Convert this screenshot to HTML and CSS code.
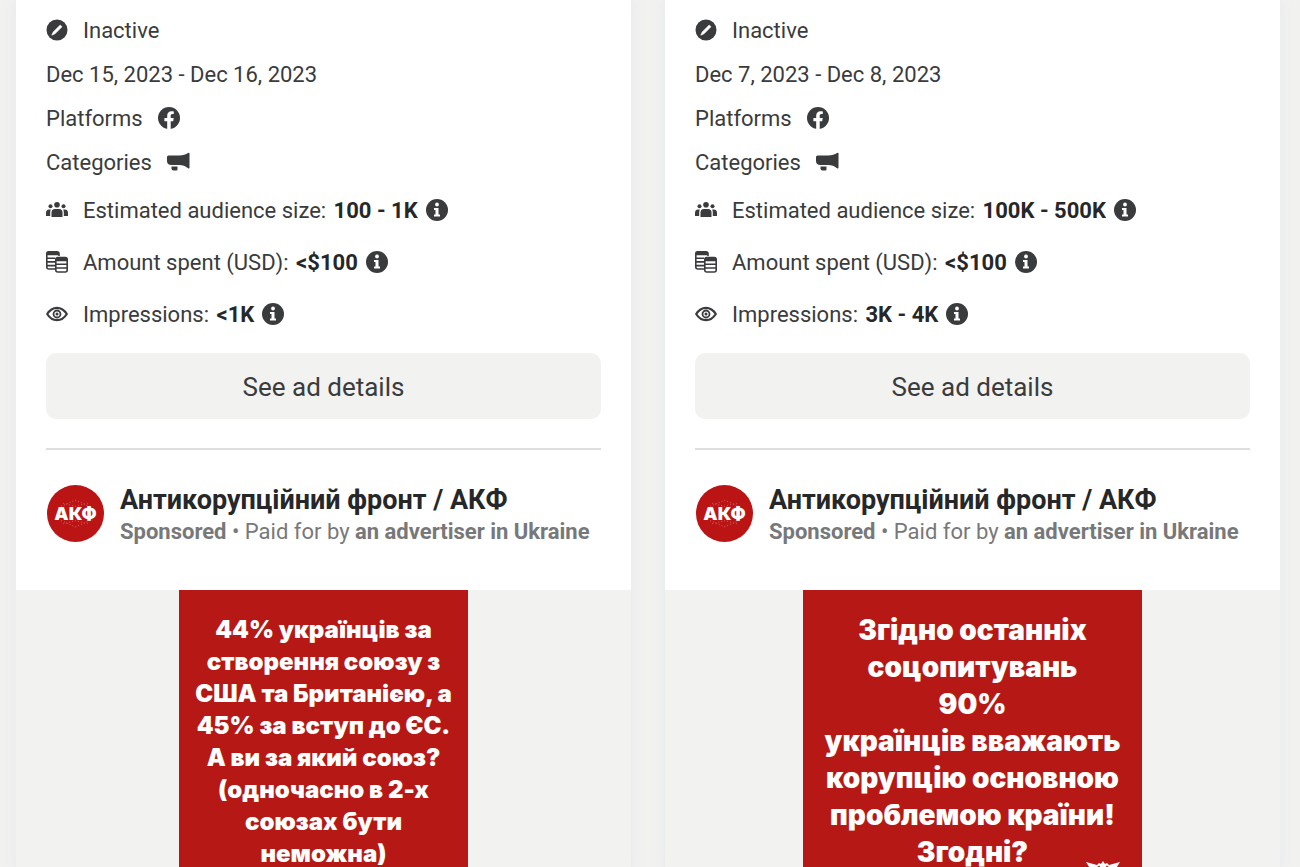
FILE: index.html
```html
<!DOCTYPE html>
<html lang="en">
<head>
    <meta charset="UTF-8">
    <meta name="viewport" content="width=device-width, initial-scale=1.0">
    <title>Ad Library</title>
    <link rel="stylesheet" href="styles.css">
</head>
<body>
    <!-- Shared icons -->
    <svg class="sprite" aria-hidden="true">
        <symbol id="icon-inactive" viewBox="0 0 22 22">
            <circle cx="11" cy="11" r="10.5" fill="#3a3b3c"/>
            <path d="M5.8 16.2L7.2 13L14.2 6L16 7.800L9 14.800Z" fill="#fff" stroke="#fff" stroke-width="0.6" stroke-linejoin="round"/>
        </symbol>
        <symbol id="icon-facebook" viewBox="0 0 22 22">
            <circle cx="11" cy="11" r="11" fill="#3a3b3c"/>
            <path d="M9.2 22V14.2H6.4V11H9.2V8.7C9.2 5.8 10.9 4.2 13.4 4.2C14.6 4.2 15.8 4.4 15.8 4.4V7.1H14.4C13.1 7.1 12.7 7.9 12.7 8.8V11H15.7L15.2 14.2H12.7V22Z" fill="#fff"/>
        </symbol>
        <symbol id="icon-megaphone" viewBox="0 0 24 20">
            <path d="M0 5Q0 3.5 1.500 3.5H12C16 3.5 19 2.5 21 1Q22.500 0.3 22.500 1.5V15.5Q22.500 17.200 21 16.300C18 14 16 13 12 13H4.5Q0 13 0 9Z" fill="#3a3b3c"/>
            <path d="M4.500 14.500H10.500V17Q10.500 18.500 9.500 18.500H6.5Q4.500 18.500 4.500 16.5Z" fill="#3a3b3c"/>
        </symbol>
        <symbol id="icon-people" viewBox="0 0 22 22">
            <g fill="#3a3b3c">
                <circle cx="11" cy="5.7" r="2.8"/>
                <path d="M5.5 18V13.5Q5.5 10 9 10H13Q16.500 10 16.500 13.500V18Z"/>
                <circle cx="4.500" cy="7.200" r="2"/>
                <circle cx="17.500" cy="7.200" r="2"/>
                <path d="M0 17V14Q0 10.500 3 10.500H4.800Q4.200 12 4.200 13.500V17Z"/>
                <path d="M22 17V14Q22 10.500 19 10.500H17.200Q17.800 12 17.800 13.500V17Z"/>
            </g>
        </symbol>
        <symbol id="icon-coins" viewBox="0 0 22 22">
            <g fill="none" stroke="#3a3b3c" stroke-width="1.6">
                <path d="M9 18H3Q0.800 18 0.800 16V2.500Q0.800 0.800 2.500 0.800H11Q13 0.800 13 2.500V5"/>
                <path d="M1 3.500H13M1 7.200H9M1 10.900H9M1 14.600H9"/>
                <rect x="9.800" y="6.500" width="11.400" height="14.500" rx="2"/>
                <path d="M10 9.500H21M10 13.200H21M10 17H21"/>
            </g>
            <path d="M1 1H13V3.500H1ZM10 7H21V9.500H10Z" fill="#3a3b3c"/>
        </symbol>
        <symbol id="icon-eye" viewBox="0 0 22 22">
            <path d="M1.200 11Q5 4.800 11 4.800T20.800 11Q17 17.200 11 17.200T1.200 11Z" fill="none" stroke="#3a3b3c" stroke-width="2.200" stroke-linejoin="round"/>
            <circle cx="11" cy="11" r="3.500" fill="none" stroke="#3a3b3c" stroke-width="1.800"/>
            <circle cx="11" cy="11" r="1.500" fill="#3a3b3c"/>
        </symbol>
        <symbol id="icon-info" viewBox="0 0 22 22">
            <circle cx="11" cy="11" r="11" fill="#3a3b3c"/>
            <circle cx="11" cy="5.500" r="1.900" fill="#fff"/>
            <path d="M8 9H12.500V15.500H14V17.500H8V15.500H9.500V11H8Z" fill="#fff"/>
        </symbol>
        <symbol id="icon-burst" viewBox="0 0 40 40">
            <g fill="none" stroke="#fff" stroke-width="1" stroke-dasharray="1 2" opacity="0.3">
                <path d="M6 13L20 7L34 13M6 27L20 33L34 27"/>
                <path d="M8 10L20 13L32 10M8 30L20 27L32 30"/>
            </g>
        </symbol>
    </svg>

    <main class="ads">
        <article class="card">
            <div class="details">
                <div class="line status"><svg class="icon"><use href="#icon-inactive"/></svg><span>Inactive</span></div>
                <div class="line">Dec 15, 2023 - Dec 16, 2023</div>
                <div class="line tag">Platforms <svg class="icon"><use href="#icon-facebook"/></svg></div>
                <div class="line tag">Categories <svg class="icon wide"><use href="#icon-megaphone"/></svg></div>
                <div class="line stat">
                    <svg class="icon"><use href="#icon-people"/></svg>
                    <span>Estimated audience size: <strong>100 - 1K</strong></span>
                    <button class="info" aria-label="About audience size"><svg class="icon"><use href="#icon-info"/></svg></button>
                </div>
                <div class="line stat">
                    <svg class="icon"><use href="#icon-coins"/></svg>
                    <span>Amount spent (USD): <strong>&lt;$100</strong></span>
                    <button class="info" aria-label="About amount spent"><svg class="icon"><use href="#icon-info"/></svg></button>
                </div>
                <div class="line stat">
                    <svg class="icon"><use href="#icon-eye"/></svg>
                    <span>Impressions: <strong>&lt;1K</strong></span>
                    <button class="info" aria-label="About impressions"><svg class="icon"><use href="#icon-info"/></svg></button>
                </div>
                <button class="see-details">See ad details</button>
            </div>
            <div class="advertiser">
                <div class="avatar"><svg class="burst"><use href="#icon-burst"/></svg><span>АКФ</span></div>
                <div>
                    <a class="name" href="#">Антикорупційний фронт / АКФ</a>
                    <p class="sponsor"><strong>Sponsored</strong> • Paid for by <strong>an advertiser in Ukraine</strong></p>
                </div>
            </div>
            <div class="media">
                <div class="creative small">
                    44% українців за<br>
                    створення союзу з<br>
                    США та Британією, а<br>
                    45% за вступ до ЄС.<br>
                    А ви за який союз?<br>
                    (одночасно в 2-х<br>
                    союзах бути<br>
                    неможна)
                </div>
            </div>
        </article>

        <article class="card">
            <div class="details">
                <div class="line status"><svg class="icon"><use href="#icon-inactive"/></svg><span>Inactive</span></div>
                <div class="line">Dec 7, 2023 - Dec 8, 2023</div>
                <div class="line tag">Platforms <svg class="icon"><use href="#icon-facebook"/></svg></div>
                <div class="line tag">Categories <svg class="icon wide"><use href="#icon-megaphone"/></svg></div>
                <div class="line stat">
                    <svg class="icon"><use href="#icon-people"/></svg>
                    <span>Estimated audience size: <strong>100K - 500K</strong></span>
                    <button class="info" aria-label="About audience size"><svg class="icon"><use href="#icon-info"/></svg></button>
                </div>
                <div class="line stat">
                    <svg class="icon"><use href="#icon-coins"/></svg>
                    <span>Amount spent (USD): <strong>&lt;$100</strong></span>
                    <button class="info" aria-label="About amount spent"><svg class="icon"><use href="#icon-info"/></svg></button>
                </div>
                <div class="line stat">
                    <svg class="icon"><use href="#icon-eye"/></svg>
                    <span>Impressions: <strong>3K - 4K</strong></span>
                    <button class="info" aria-label="About impressions"><svg class="icon"><use href="#icon-info"/></svg></button>
                </div>
                <button class="see-details">See ad details</button>
            </div>
            <div class="advertiser">
                <div class="avatar"><svg class="burst"><use href="#icon-burst"/></svg><span>АКФ</span></div>
                <div>
                    <a class="name" href="#">Антикорупційний фронт / АКФ</a>
                    <p class="sponsor"><strong>Sponsored</strong> • Paid for by <strong>an advertiser in Ukraine</strong></p>
                </div>
            </div>
            <div class="media">
                <div class="creative large">
                    Згідно останніх<br>
                    соцопитувань<br>
                    90%<br>
                    українців вважають<br>
                    корупцію основною<br>
                    проблемою країни!<br>
                    Згодні?
                    <svg class="emblem" viewBox="0 0 34 20"><path d="M0 1L11 4L13 2L15 3L17 0L19 3L21 2L23 4L34 1L29 9L17 20L5 9Z" fill="#fff"/><path d="M9 9L13 6L15 9M25 9L21 6L19 9" fill="none" stroke="#b61915" stroke-width="2"/></svg>
                </div>
            </div>
        </article>
    </main>
</body>
</html>
```
FILE: styles.css
```css
* {
    box-sizing: border-box;
}
body {
    margin: 0;
    height: 100vh;
    overflow: hidden;
    font-family: Roboto, "Liberation Sans", sans-serif;
    background-color: #f1f1f0;
    color: #3a3b3c;
}
.sprite {
    display: none;
}
.ads {
    display: grid;
    grid-template-columns: 1fr 1fr;
    gap: 34px;
    height: 100%;
    padding: 0 20px 0 16px;
}
.card {
    display: flex;
    flex-direction: column;
    background: #fff;
    box-shadow: 0 0 12px #e6e7eb;
}
.details {
    margin: 0 30px;
    padding: 8px 0 29px;
    border-bottom: 2px solid #dddedf;
}
.line {
    display: flex;
    align-items: center;
    height: 44px;
    font-size: 22px;
}
.icon {
    display: block;
    flex: none;
    width: 22px;
    height: 22px;
}
.icon.wide {
    width: 24px;
    height: 20px;
}
.status, .tag {
    gap: 15px;
}
.stat {
    height: 52px;
}
.stat span {
    margin: 0 8px 0 15px;
}
.stat strong {
    margin-left: 2px;
    color: #262728;
}
.info {
    padding: 0;
    border: none;
    background: none;
    cursor: pointer;
}
.see-details {
    width: 100%;
    height: 66px;
    margin-top: 13px;
    padding: 2px 0 0;
    border: none;
    border-radius: 10px;
    background-color: #f2f2f1;
    color: #3a3b3c;
    font-family: inherit;
    font-size: 26px;
    cursor: pointer;
}
.advertiser {
    display: flex;
    gap: 16px;
    padding: 35px 31px 41px;
    white-space: nowrap;
}
.avatar {
    position: relative;
    display: flex;
    align-items: center;
    justify-content: center;
    width: 57px;
    height: 57px;
    border-radius: 50%;
    background-color: #bb1414;
    color: #fff;
    font-family: Inter, sans-serif;
    font-size: 18px;
    font-weight: 900;
}
.burst {
    position: absolute;
    inset: 8px;
    width: 41px;
    height: 41px;
}
.name {
    display: block;
    color: #262728;
    font-size: 27px;
    font-weight: 700;
    line-height: 30px;
    text-decoration: none;
}
.sponsor {
    margin: 0;
    color: #77787a;
    font-size: 22px;
    line-height: 34px;
}
.media {
    display: flex;
    flex: 1;
    justify-content: center;
    min-height: 0;
    background-color: #f2f2f1;
}
.creative {
    position: relative;
    background-color: #b61915;
    color: #fff;
    font-family: Inter, sans-serif;
    font-weight: 900;
    text-align: center;
    white-space: nowrap;
}
.small {
    width: 47%;
    padding-top: 24px;
    font-size: 24px;
    line-height: 32px;
}
.large {
    width: 55%;
    padding-top: 22px;
    font-size: 28px;
    line-height: 37px;
}
.emblem {
    position: absolute;
    top: 271px;
    right: 22px;
    width: 34px;
    height: 20px;
}
```
